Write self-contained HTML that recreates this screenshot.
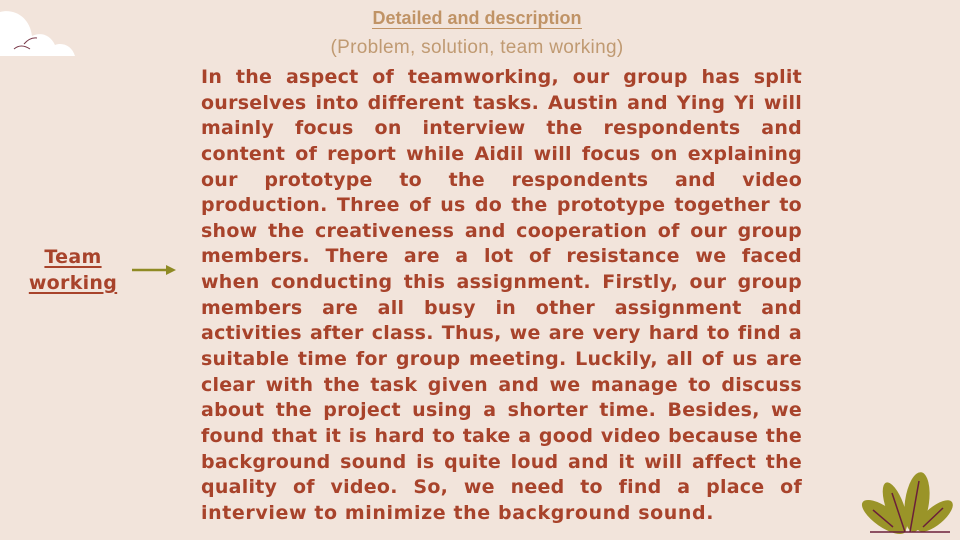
<!DOCTYPE html>
<html><head><meta charset="utf-8"><style>
body{margin:0;width:960px;height:540px;overflow:hidden;background:#f2e4db;position:relative;font-family:"Liberation Sans",sans-serif}
.t1{position:absolute;left:0;width:954px;top:8px;text-align:center;font-size:18px;font-weight:bold;color:#c09366;}
.t1 span{border-bottom:1.5px solid #c09366;}
.t2{position:absolute;left:0;width:954px;top:37px;text-align:center;font-size:19px;letter-spacing:0.3px;color:#c09a72;}
.body{position:absolute;left:201px;top:65px;width:601px;color:#a8432b;font-family:"DejaVu Sans",sans-serif;font-weight:bold;font-size:19px;letter-spacing:0.25px}
.body div{height:25.65px;line-height:25.65px;text-align:justify;text-align-last:justify;white-space:nowrap}
.body div.l{text-align-last:left;letter-spacing:0.6px}
.tw{position:absolute;left:20px;top:244px;width:106px;text-align:center;color:#a8432b;font-family:"DejaVu Sans",sans-serif;font-weight:bold;font-size:19px;line-height:26px;letter-spacing:0.3px}
.tw span{text-decoration:underline;text-decoration-thickness:2px;text-underline-offset:3px}
</style></head><body>
<svg style="position:absolute;left:0;top:0" width="80" height="60">
<path d="M0 56 V12 C15 8 30 18 32 36 C40 32 50 34 55 45 C63 42 72 46 75 56 Z" fill="#fff"/>
<path d="M14 49 Q21 43 30 49 M24 44 Q30 37 37 38" stroke="#7a3a4a" stroke-width="1" fill="none"/>
</svg>
<div class="t1"><span>Detailed and description</span></div>
<div class="t2">(Problem, solution, team working)</div>
<div class="tw"><span>Team</span><br><span>working</span></div>
<svg style="position:absolute;left:130px;top:263px" width="48" height="14"><path d="M2 7 H38" stroke="#8f8a24" stroke-width="2.5"/><path d="M36 2 L46 7 L36 12 Z" fill="#8f8a24"/></svg>
<div class="body">
<div>In the aspect of teamworking, our group has split</div>
<div>ourselves into different tasks. Austin and Ying Yi will</div>
<div>mainly focus on interview the respondents and</div>
<div>content of report while Aidil will focus on explaining</div>
<div>our prototype to the respondents and video</div>
<div>production. Three of us do the prototype together to</div>
<div>show the creativeness and cooperation of our group</div>
<div>members. There are a lot of resistance we faced</div>
<div>when conducting this assignment. Firstly, our group</div>
<div>members are all busy in other assignment and</div>
<div>activities after class. Thus, we are very hard to find a</div>
<div>suitable time for group meeting. Luckily, all of us are</div>
<div>clear with the task given and we manage to discuss</div>
<div>about the project using a shorter time. Besides, we</div>
<div>found that it is hard to take a good video because the</div>
<div>background sound is quite loud and it will affect the</div>
<div>quality of video. So, we need to find a place of</div>
<div class="l">interview to minimize the background sound.</div>
</div>
<svg style="position:absolute;left:840px;top:460px" width="120" height="80">
<g fill="#9a9428">
<ellipse cx="44" cy="57" rx="26" ry="10" transform="rotate(35 44 57)"/>
<ellipse cx="55" cy="47" rx="9" ry="26" transform="rotate(-20 55 47)"/>
<ellipse cx="77" cy="42" rx="12" ry="30" transform="rotate(8 77 42)"/>
<ellipse cx="95" cy="56" rx="22" ry="9" transform="rotate(-40 95 56)"/>
</g>
<g stroke="#6b1f3a" stroke-width="1.5" fill="none">
<path d="M33 50 L53 67 M52 33 L65 72 M79 21 L70 72 M103 48 L83 67"/>
<path d="M30 72 H110"/>
</g>
</svg>
</body></html>
